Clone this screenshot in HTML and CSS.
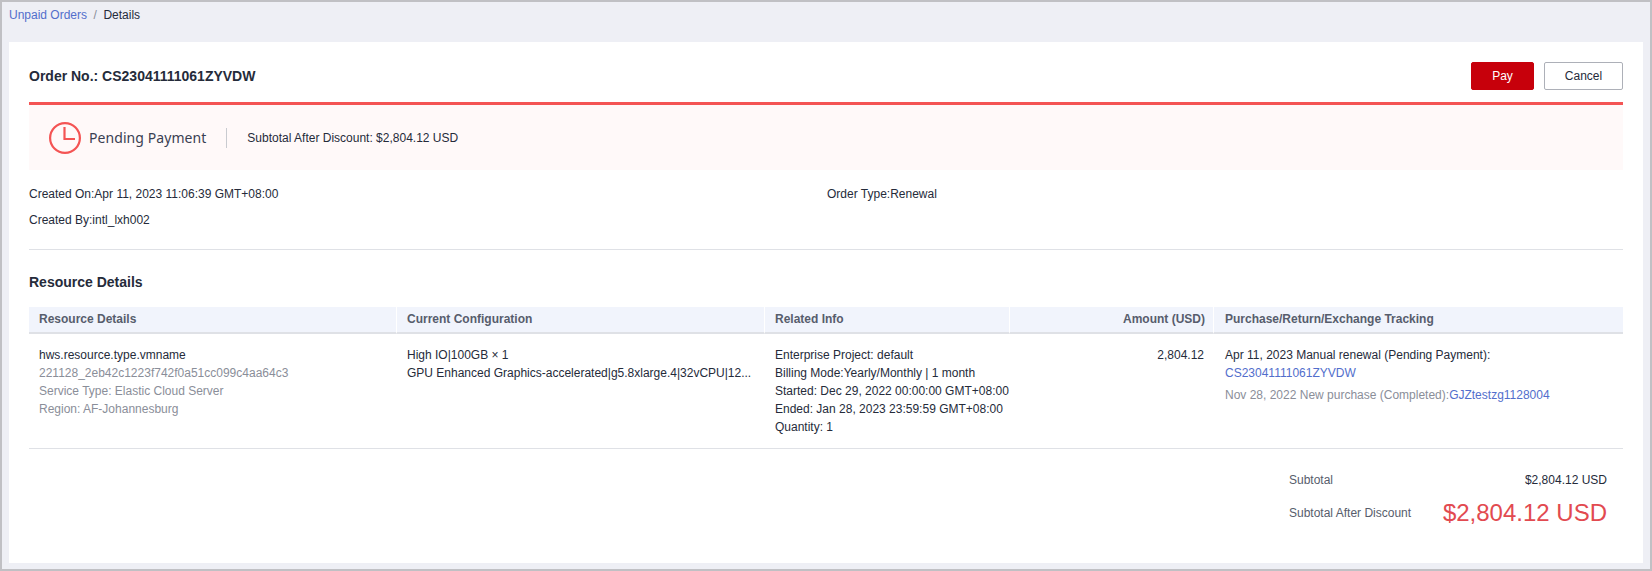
FILE: index.html
```html
<!DOCTYPE html>
<html lang="en">
<head>
<meta charset="utf-8">
<title>Order Details</title>
<link rel="stylesheet" href="styles.css">
</head>
<body>
<div class="frame">
  <nav class="crumbs"><a href="#" class="link">Unpaid Orders</a><span class="sep">/</span><span>Details</span></nav>
  <main class="card">
    <header class="order-head">
      <h1 class="order-no">Order No.: CS23041111061ZYVDW</h1>
      <div class="actions">
        <button class="btn btn-pay">Pay</button>
        <button class="btn btn-cancel">Cancel</button>
      </div>
    </header>
    <section class="banner">
      <svg class="clock" width="32" height="32" viewBox="0 0 32 32" fill="none" stroke="#f45454" stroke-width="2.2"><circle cx="16" cy="16" r="14.9"/><path d="M15.5 5v12h10.5"/></svg>
      <span class="status">Pending Payment</span>
      <span class="divider"></span>
      <span>Subtotal After Discount: $2,804.12 USD</span>
    </section>
    <section class="meta">
      <div>Created On:Apr 11, 2023 11:06:39 GMT+08:00</div>
      <div>Order Type:Renewal</div>
      <div>Created By:intl_lxh002</div>
    </section>
    <h2 class="section-title">Resource Details</h2>
    <div class="table">
      <div class="th">Resource Details</div>
      <div class="th">Current Configuration</div>
      <div class="th">Related Info</div>
      <div class="th num">Amount (USD)</div>
      <div class="th th-last">Purchase/Return/Exchange Tracking</div>
      <div class="td">
        <div>hws.resource.type.vmname</div>
        <div class="muted">221128_2eb42c1223f742f0a51cc099c4aa64c3</div>
        <div class="muted">Service Type: Elastic Cloud Server</div>
        <div class="muted">Region: AF-Johannesburg</div>
      </div>
      <div class="td td-inner">
        <div>High IO|100GB × 1</div>
        <div>GPU Enhanced Graphics-accelerated|g5.8xlarge.4|32vCPU|12...</div>
      </div>
      <div class="td td-inner">
        <div>Enterprise Project: default</div>
        <div>Billing Mode:Yearly/Monthly | 1 month</div>
        <div>Started: Dec 29, 2022 00:00:00 GMT+08:00</div>
        <div>Ended: Jan 28, 2023 23:59:59 GMT+08:00</div>
        <div>Quantity: 1</div>
      </div>
      <div class="td num">2,804.12</div>
      <div class="td td-last">
        <div>Apr 11, 2023 Manual renewal (Pending Payment):</div>
        <div><a href="#" class="link">CS23041111061ZYVDW</a></div>
        <div class="track-old"><span class="muted">Nov 28, 2022 New purchase (Completed):</span><a href="#" class="link">GJZtestzg1128004</a></div>
      </div>
    </div>
    <section class="totals">
      <div class="total-row"><span class="total-label">Subtotal</span><span>$2,804.12 USD</span></div>
      <div class="total-row"><span class="total-label">Subtotal After Discount</span><span class="grand">$2,804.12 USD</span></div>
    </section>
  </main>
</div>
</body>
</html>
```
FILE: styles.css
```css
* { box-sizing: border-box; }
html, body { margin: 0; height: 100%; }
body {
  font-family: "Liberation Sans", Arial, sans-serif;
  font-size: 12px;
  line-height: 18px;
  color: #252b3a;
}
.frame {
  width: 1652px;
  height: 571px;
  border: 2px solid #c0c0c4;
  background: #eeeff5;
  padding: 0 7px 6px;
  display: flex;
  flex-direction: column;
}
.link { color: #526ecc; text-decoration: none; }
.crumbs { height: 40px; padding-top: 4px; }
.sep { color: #8a8e99; margin: 0 6.5px; }
.card { flex: 1; background: #fff; padding: 0 20px; min-height: 0; }
.order-head {
  height: 60px;
  padding-top: 8px;
  display: flex;
  align-items: center;
  justify-content: space-between;
}
.order-no { margin: 0; font-size: 14px; font-weight: 700; }
.actions { display: flex; gap: 10px; }
.btn {
  height: 28px;
  font: inherit;
  border-radius: 2px;
  padding: 0;
}
.btn-pay { width: 63px; background: #c7000b; border: 1px solid #c7000b; color: #fff; }
.btn-cancel { width: 79px; background: #fff; border: 1px solid #adb0b8; color: #252b3a; }
.banner {
  height: 68px;
  border-top: 3px solid #f45454;
  background: #fff9f9;
  padding-left: 20px;
  display: flex;
  align-items: center;
}
.clock { flex: none; }
.status { font-family: "Noto Sans", sans-serif; font-size: 14px; color: #3a4052; letter-spacing: 0.07px; margin-left: 8px; }
.divider { width: 1px; height: 20px; background: #c9cbd0; margin: 0 20px; }
.meta {
  display: grid;
  grid-template-columns: 798px 1fr;
  align-content: start;
  row-gap: 8px;
  padding: 15px 0 0;
  border-bottom: 1px solid #dfe1e6;
  height: 80px;
}
.section-title { margin: 23px 0 16px; font-size: 14px; line-height: 18px; font-weight: 700; }
.table {
  display: grid;
  grid-template-columns: 367px 368px 245px 204px 1fr;
  border-bottom: 1px solid #dfe1e6;
}
.th {
  height: 27px;
  line-height: 24px;
  background: #f1f4fc;
  border-bottom: 2px solid #dfe1e6;
  border-left: 1px solid #fff;
  padding: 0 10px;
  font-weight: 700;
  color: #575d6c;
}
.th:first-child { border-left: 0; }
.th-last { padding-left: 11px; }
.th.num { padding-right: 8px; }
.td { height: 114px; padding: 12px 10px 0; white-space: nowrap; }
.td-inner { padding-left: 11px; }
.td.num { padding-right: 9px; }
.td-last { padding-left: 12px; }
.num { text-align: right; }
.muted { color: #8a8e99; }
.track-old { margin-top: 4px; }
.totals { padding: 22px 16px 0 0; margin-left: auto; width: 334px; }
.total-row { display: flex; justify-content: space-between; align-items: center; }
.total-row + .total-row { margin-top: 4px; height: 40px; }
.total-label { color: #575d6c; }
.grand { font-size: 24px; line-height: 40px; color: #e24a50; }
```
